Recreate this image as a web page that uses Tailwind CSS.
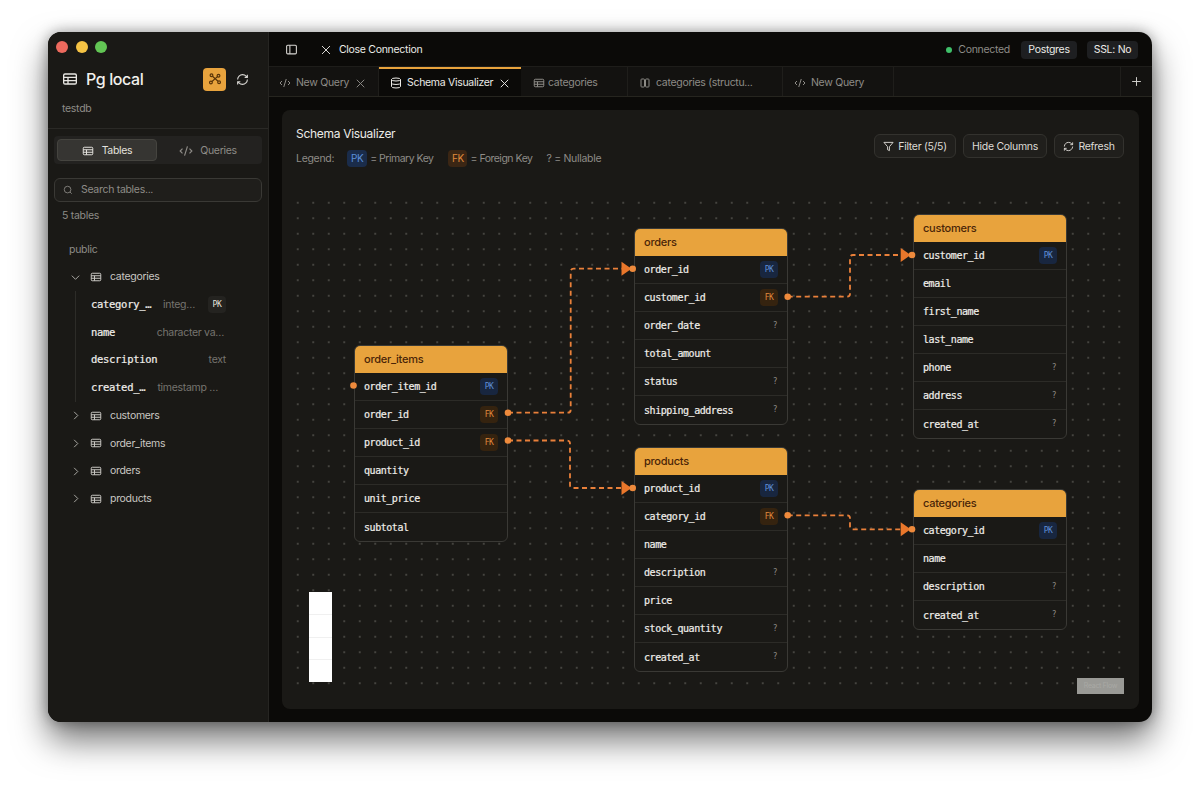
<!DOCTYPE html>
<html lang="en">
<head>
    <meta charset="UTF-8">
    <meta name="viewport" content="width=device-width, initial-scale=1.0">
    <title>Pg local - Schema Visualizer</title>
    <script src="https://cdn.jsdelivr.net/npm/@tailwindcss/browser@4"></script>
</head>
<body class="bg-white w-[1200px] h-[786px] overflow-hidden font-['Inter',sans-serif] tracking-[-0.3px] pt-8 pl-12">

    <svg class="hidden">
        <symbol id="i-table" viewBox="0 0 24 24"><rect x="2.5" y="4.5" width="19" height="15" rx="2"/><path d="M2.5 9.5h19M2.5 14.5h19M9 9.5v10"/></symbol>
        <symbol id="i-code" viewBox="0 0 24 24"><path d="m18 16 4-4-4-4M6 8l-4 4 4 4M14.5 4l-5 16"/></symbol>
        <symbol id="i-db" viewBox="0 0 24 24"><ellipse cx="12" cy="5" rx="9" ry="3"/><path d="M3 5v14a9 3 0 0 0 18 0V5M3 12a9 3 0 0 0 18 0"/></symbol>
        <symbol id="i-cols" viewBox="0 0 24 24"><rect x="4" y="4" width="7" height="16" rx="1.5"/><rect x="13" y="4" width="7" height="16" rx="1.5"/></symbol>
        <symbol id="i-refresh" viewBox="0 0 24 24"><path d="M3 12a9 9 0 0 1 9-9 9.75 9.75 0 0 1 6.74 2.74L21 8M21 3v5h-5M21 12a9 9 0 0 1-9 9 9.75 9.75 0 0 1-6.74-2.74L3 16M8 16H3v5"/></symbol>
        <symbol id="i-x" viewBox="0 0 24 24"><path d="M18 6 6 18M6 6l12 12"/></symbol>
        <symbol id="i-right" viewBox="0 0 24 24"><path d="m9 4 8 8-8 8"/></symbol>
        <symbol id="i-down" viewBox="0 0 24 24"><path d="m4 8 8 8 8-8"/></symbol>
    </svg>

    <div class="w-[1104px] h-[690px] rounded-[13px] overflow-hidden flex bg-[#0b0a08] shadow-[0_18px_34px_rgba(0,0,0,0.55),0_0_14px_rgba(0,0,0,0.35)]">

        <!-- sidebar -->
        <aside class="w-[221px] shrink-0 bg-[#1a1916] border-r border-[#262522] flex flex-col">
            <div class="h-[96px] px-[14px] pt-[9px]">
                <div class="flex gap-[7.7px] -ml-[6px]">
                    <span class="w-3 h-3 rounded-full bg-[#ed6a5e]"></span>
                    <span class="w-3 h-3 rounded-full bg-[#f5c344]"></span>
                    <span class="w-3 h-3 rounded-full bg-[#62c554]"></span>
                </div>
                <div class="flex items-center mt-[14px]">
                    <svg class="w-4 h-4 text-[#e8e6e2] fill-none stroke-current stroke-2"><use href="#i-table"/></svg>
                    <span class="ml-2 text-[16px] font-medium text-[#f2f0ec] tracking-[-0.4px]">Pg local</span>
                    <button class="ml-auto w-[23px] h-[23px] rounded bg-[#e8a33d] flex items-center justify-center">
                        <svg class="w-[14px] h-[14px] text-[#5a3408] fill-none stroke-current stroke-2" viewBox="0 0 24 24"><circle cx="6" cy="5.500" r="2.400"/><circle cx="18" cy="6.500" r="2.400"/><circle cx="5" cy="18" r="2.400"/><circle cx="19" cy="17.500" r="2.400"/><path d="m7.700 7.200 9.500 8.600M16.200 8 6.800 16.300"/></svg>
                    </button>
                    <svg class="w-[13px] h-[13px] ml-[10px] mr-[5px] text-[#d8d6d2] fill-none stroke-current stroke-2"><use href="#i-refresh"/></svg>
                </div>
                <div class="mt-[10px] text-[10.5px] text-[#8e8c87]">testdb</div>
            </div>

            <div class="h-px bg-[#2a2926]"></div>

            <div class="mx-[6px] mt-[7px] h-[28px] bg-[#232220] rounded-sm p-[3px] flex text-[10.5px]">
                <div class="w-[100px] pt-px bg-[#363532] border border-[#45443f] rounded-sm flex items-center justify-center gap-[8px] text-[#e4e2de]">
                    <svg class="w-3 h-3 fill-none stroke-current stroke-2"><use href="#i-table"/></svg>Tables
                </div>
                <div class="flex-1 pt-px flex items-center justify-center gap-[7px] text-[#8e8c87]">
                    <svg class="w-[14px] h-[14px] fill-none stroke-current stroke-2"><use href="#i-code"/></svg>Queries
                </div>
            </div>

            <div class="mx-[6px] mt-[14px] h-[24px] bg-[#1f1e1b] border border-[#3a3935] rounded-md flex items-center px-2 gap-[8px] text-[10.5px] text-[#8e8c87]">
                <svg class="w-[10px] h-[10px] fill-none stroke-current stroke-2" viewBox="0 0 24 24"><circle cx="11" cy="11" r="8"/><path d="m21 21-4.3-4.3"/></svg>
                Search tables...
            </div>
            <div class="mt-[6px] ml-[14px] text-[10.5px] text-[#8e8c87]">5 tables</div>

            <div class="mt-[12px] ml-[21px] w-[157px] text-[10.5px]">
                <div class="h-[27.7px] flex items-center text-[#8e8c87]">public</div>
                <div class="h-[27.7px] flex items-center text-[#c9c7c2]">
                    <svg class="w-[11px] h-[11px] ml-[1px] mr-[9px] text-[#b5b3ae] fill-none stroke-current stroke-2"><use href="#i-down"/></svg>
                    <svg class="w-3 h-3 mr-2 fill-none stroke-current stroke-2"><use href="#i-table"/></svg>categories
                </div>
                <div class="ml-[6px] pl-[15px] border-l border-[#2d2c28]">
                    <div class="h-[27.7px] flex items-center justify-between">
                        <span class="font-['DejaVu_Sans_Mono',monospace] text-[10.500px] tracking-[-0.3px] [-webkit-text-stroke:0.2px] text-[#f0eeea]">category_…</span>
                        <span class="text-[#76746f] ml-auto">integ…</span>
                        <span class="ml-[13px] w-[18px] h-[17px] flex items-center justify-center rounded-sm bg-[#242320] font-['DejaVu_Sans_Mono',monospace] text-[8px] text-[#e4e2de]">PK</span>
                    </div>
                    <div class="h-[27.7px] flex items-center justify-between">
                        <span class="font-['DejaVu_Sans_Mono',monospace] text-[10.500px] tracking-[-0.3px] [-webkit-text-stroke:0.2px] text-[#f0eeea]">name</span>
                        <span class="text-[#76746f] mr-[2px]">character va…</span>
                    </div>
                    <div class="h-[27.7px] flex items-center justify-between">
                        <span class="font-['DejaVu_Sans_Mono',monospace] text-[10.500px] tracking-[-0.3px] [-webkit-text-stroke:0.2px] text-[#f0eeea]">description</span>
                        <span class="text-[#76746f]">text</span>
                    </div>
                    <div class="h-[27.7px] flex items-center justify-between">
                        <span class="font-['DejaVu_Sans_Mono',monospace] text-[10.500px] tracking-[-0.3px] [-webkit-text-stroke:0.2px] text-[#f0eeea]">created_…</span>
                        <span class="text-[#76746f] mr-2">timestamp …</span>
                    </div>
                </div>
                <div class="h-[27.7px] flex items-center text-[#c9c7c2]">
                    <svg class="w-[11px] h-[11px] ml-[1px] mr-[9px] text-[#b5b3ae] fill-none stroke-current stroke-2"><use href="#i-right"/></svg>
                    <svg class="w-3 h-3 mr-2 fill-none stroke-current stroke-2"><use href="#i-table"/></svg>customers
                </div>
                <div class="h-[27.7px] flex items-center text-[#c9c7c2]">
                    <svg class="w-[11px] h-[11px] ml-[1px] mr-[9px] text-[#b5b3ae] fill-none stroke-current stroke-2"><use href="#i-right"/></svg>
                    <svg class="w-3 h-3 mr-2 fill-none stroke-current stroke-2"><use href="#i-table"/></svg>order_items
                </div>
                <div class="h-[27.7px] flex items-center text-[#c9c7c2]">
                    <svg class="w-[11px] h-[11px] ml-[1px] mr-[9px] text-[#b5b3ae] fill-none stroke-current stroke-2"><use href="#i-right"/></svg>
                    <svg class="w-3 h-3 mr-2 fill-none stroke-current stroke-2"><use href="#i-table"/></svg>orders
                </div>
                <div class="h-[27.7px] flex items-center text-[#c9c7c2]">
                    <svg class="w-[11px] h-[11px] ml-[1px] mr-[9px] text-[#b5b3ae] fill-none stroke-current stroke-2"><use href="#i-right"/></svg>
                    <svg class="w-3 h-3 mr-2 fill-none stroke-current stroke-2"><use href="#i-table"/></svg>products
                </div>
            </div>
        </aside>

        <!-- main -->
        <main class="flex-1 flex flex-col min-w-0">
            <header class="h-[35px] shrink-0 flex items-center border-b border-[#1e1d1a] pl-[16px] pr-[14px] pt-px text-[10.5px]">
                <svg class="w-[13px] h-[13px] text-[#d8d6d2] fill-none stroke-current stroke-2" viewBox="0 0 24 24"><rect x="3" y="4" width="18" height="16" rx="2"/><path d="M9 4v16"/></svg>
                <svg class="w-4 h-4 ml-[20px] text-[#d8d6d2] fill-none stroke-current stroke-[1.5]"><use href="#i-x"/></svg>
                <span class="ml-[5px] text-[#ecebe7]">Close Connection</span>
                <span class="ml-auto w-[6px] h-[6px] rounded-full bg-[#3fc06a]"></span>
                <span class="ml-[6px] text-[#8e8c87]">Connected</span>
                <span class="ml-[11px] w-[56px] h-[18px] flex items-center justify-center rounded-sm bg-[#1e1f21] text-[#ecebe7]">Postgres</span>
                <span class="ml-[10px] w-[51px] h-[18px] flex items-center justify-center rounded-sm bg-[#1e1f21] text-[#ecebe7]">SSL: No</span>
            </header>

            <nav class="h-[30px] shrink-0 flex bg-[#131210] border-b border-[#26251f] text-[10.5px] text-[#8e8c87]">
                <div class="w-[110px] flex items-center pl-[10px] pt-[3px] border-r border-[#1f1e1b]">
                    <svg class="w-3 h-3 mr-[5px] fill-none stroke-current stroke-2"><use href="#i-code"/></svg>New Query
                    <svg class="w-[15px] h-[15px] ml-[4px] fill-none stroke-current stroke-[1.5]"><use href="#i-x"/></svg>
                </div>
                <div class="w-[142px] flex items-center pl-[11px] pt-px bg-[#0b0a08] border-t-2 border-[#e8a33d] text-[#ecebe7]">
                    <svg class="w-3 h-3 mr-[5px] fill-none stroke-current stroke-2"><use href="#i-db"/></svg>Schema Visualizer
                    <svg class="w-[15px] h-[15px] ml-[4px] fill-none stroke-current stroke-[1.5]"><use href="#i-x"/></svg>
                </div>
                <div class="w-[107px] flex items-center pl-[12px] pt-[3px] border-r border-[#1f1e1b]">
                    <svg class="w-3 h-3 mr-[3px] fill-none stroke-current stroke-2"><use href="#i-table"/></svg>categories
                </div>
                <div class="w-[155px] flex items-center pl-[11px] pt-[3px] border-r border-[#1f1e1b]">
                    <svg class="w-3 h-3 mr-[5px] fill-none stroke-current stroke-2"><use href="#i-cols"/></svg>categories (structu...
                </div>
                <div class="w-[111px] flex items-center pl-[11px] pt-[3px] border-r border-[#1f1e1b]">
                    <svg class="w-3 h-3 mr-[5px] fill-none stroke-current stroke-2"><use href="#i-code"/></svg>New Query
                </div>
                <div class="ml-auto w-[32px] flex items-center justify-center border-l border-[#1f1e1b] text-[#d8d6d2]">
                    <svg class="w-[15px] h-[15px] fill-none stroke-current stroke-[1.5]" viewBox="0 0 24 24"><path d="M5 12h14M12 5v14"/></svg>
                </div>
            </nav>

            <div class="flex-1 p-[13px] min-h-0">
                <section class="h-[599px] w-[857px] bg-[#1a1916] rounded-lg flex flex-col">
                    <div class="h-[85px] shrink-0 pl-[14px] pr-[15px] pt-[16px] flex justify-between">
                        <div>
                            <h2 class="text-[12px] leading-[16px] text-[#ecebe7]">Schema Visualizer</h2>
                            <div class="mt-[8px] flex items-center text-[10.5px] text-[#8e8c87]">
                                <span>Legend:</span>
                                <span class="ml-[13px] w-[20px] h-[17px] flex items-center justify-center rounded-sm bg-[#1a2c4a] text-[#5b8fd8] text-[10px]">PK</span>
                                <span class="ml-[3px] tracking-[-0.5px]">= Primary Key</span>
                                <span class="ml-[15px] w-[19px] h-[17px] flex items-center justify-center rounded-sm bg-[#3b2614] text-[#e08a3c] text-[10px]">FK</span>
                                <span class="ml-[3px] tracking-[-0.5px]">= Foreign Key</span>
                                <span class="ml-[14px]">? = Nullable</span>
                            </div>
                        </div>
                        <div class="flex gap-[7px] mt-[8px] text-[10.5px] text-[#dddbd6]">
                            <button class="h-[24px] w-[82px] pt-px flex items-center justify-center gap-[4px] rounded-md border border-[#33322e] bg-[#201f1c]">
                                <svg class="w-[11px] h-[11px] fill-none stroke-current stroke-2" viewBox="0 0 24 24"><path d="M22 3H2l8 9.46V19l4 2v-8.54L22 3z"/></svg>Filter (5/5)
                            </button>
                            <button class="h-[24px] w-[84px] pt-px flex items-center justify-center rounded-md border border-[#33322e] bg-[#201f1c]">Hide Columns</button>
                            <button class="h-[24px] w-[70px] pt-px flex items-center justify-center gap-[4px] rounded-md border border-[#33322e] bg-[#201f1c]">
                                <svg class="w-[11px] h-[11px] fill-none stroke-current stroke-2"><use href="#i-refresh"/></svg>Refresh
                            </button>
                        </div>
                    </div>

                    <!-- diagram canvas -->
                    <div id="canvas" class="relative w-[841px] h-[499px] ml-[8px] bg-[radial-gradient(circle,#45443f_0.7px,transparent_1px)] bg-[length:15.5px_15.5px]">
                        <svg class="absolute inset-0 w-full h-full z-20 pointer-events-none" viewBox="0 0 841 499" fill="none">
                            <g stroke="#e9803a" stroke-width="1.8" stroke-dasharray="5 3.500">
                                <path d="M218 217.700H277.700Q280.700 217.700 280.700 214.700V76.700Q280.700 73.700 283.700 73.700H334"/>
                                <path d="M218 245.500H277Q280 245.500 280 248.500V290Q280 293 283 293H334"/>
                                <path d="M497.700 101.700H557Q560 101.700 560 98.700V63Q560 60 563 60H613"/>
                                <path d="M497.700 320.300H557Q560 320.300 560 323.300V331.300Q560 334.300 563 334.300H613"/>
                            </g>
                            <g fill="#e9772b">
                                <path d="M331.500 66.700l10 7-10 7z"/><path d="M331.500 286l10 7-10 7z"/>
                                <path d="M610.700 53l10 7-10 7z"/><path d="M610.700 327.300l10 7-10 7z"/>
                            </g>
                            <g fill="#ee8a3c">
                                <circle cx="218" cy="217.700" r="3.300"/><circle cx="218" cy="245.500" r="3.300"/>
                                <circle cx="497.700" cy="101.700" r="3.300"/><circle cx="497.700" cy="320.300" r="3.300"/>
                                <circle cx="63.500" cy="190.500" r="3.300"/><circle cx="342.700" cy="73.700" r="3.300"/>
                                <circle cx="342.700" cy="293" r="3.300"/><circle cx="622" cy="60" r="3.300"/><circle cx="622" cy="334.300" r="3.300"/>
                            </g>
                        </svg>
                        <!-- react flow controls -->
                        <div class="absolute left-[19px] top-[397px] w-[23px] h-[90px] bg-white flex flex-col z-20">
                            <div class="flex-1 border-b border-[#f0f0f0]"></div>
                            <div class="flex-1 border-b border-[#f0f0f0]"></div>
                            <div class="flex-1 border-b border-[#f0f0f0]"></div>
                            <div class="flex-1"></div>
                        </div>
                        <div class="absolute left-[787px] top-[483px] w-[47px] h-[16px] bg-[#9a9a96] flex items-center justify-center text-[7px] text-[#a9a9a5]">React Flow</div>
                    </div>
                </section>
            </div>
        </main>
    </div>

    <script>
        const nodes = [
            { name: 'order_items', x: 64, y: 150, cols: [['order_item_id', 'PK'], ['order_id', 'FK'], ['product_id', 'FK'], ['quantity'], ['unit_price'], ['subtotal']] },
            { name: 'orders', x: 344, y: 33, cols: [['order_id', 'PK'], ['customer_id', 'FK'], ['order_date', '?'], ['total_amount'], ['status', '?'], ['shipping_address', '?']] },
            { name: 'customers', x: 623, y: 19, cols: [['customer_id', 'PK'], ['email'], ['first_name'], ['last_name'], ['phone', '?'], ['address', '?'], ['created_at', '?']] },
            { name: 'products', x: 344, y: 252, cols: [['product_id', 'PK'], ['category_id', 'FK'], ['name'], ['description', '?'], ['price'], ['stock_quantity', '?'], ['created_at', '?']] },
            { name: 'categories', x: 623, y: 294, cols: [['category_id', 'PK'], ['name'], ['description', '?'], ['created_at', '?']] },
        ];

        const renderTag = (tag) => {
            if (tag === 'PK') return '<span class="w-[18px] h-[17px] flex items-center justify-center rounded-sm bg-[#18263f] text-[#5f8fd6] text-[8px]">PK</span>';
            if (tag === 'FK') return '<span class="w-[18px] h-[17px] flex items-center justify-center rounded-sm bg-[#35230f] text-[#e08a3c] text-[8px]">FK</span>';
            if (tag === '?') return '<span class="mr-[1px] text-[8px] text-[#8e8c87]">?</span>';
            return '';
        };

        const canvas = document.getElementById('canvas');
        nodes.forEach(node => {
            const rows = node.cols.map(([col, tag]) => `
                <div class="h-[28px] flex items-center justify-between px-[9px] border-b border-[#2c2b27] last:border-b-0">
                    <span class="text-[#f0eeea] [-webkit-text-stroke:0.2px]">${col}</span>${renderTag(tag)}
                </div>`).join('');
            canvas.insertAdjacentHTML('beforeend', `
                <div class="absolute z-10 w-[154px] rounded-md border border-[#3a3935] bg-[#1a1916] overflow-hidden font-['DejaVu_Sans_Mono',monospace] text-[10px] tracking-[-0.45px]" style="left:${node.x}px;top:${node.y}px">
                    <div class="h-[27px] flex items-center px-[9px] bg-[#e8a33d] text-[#4a2508] font-['Inter',sans-serif] text-[11px] font-medium tracking-[-0.25px]">${node.name}</div>
                    ${rows}
                </div>`);
        });
    </script>
</body>
</html>
